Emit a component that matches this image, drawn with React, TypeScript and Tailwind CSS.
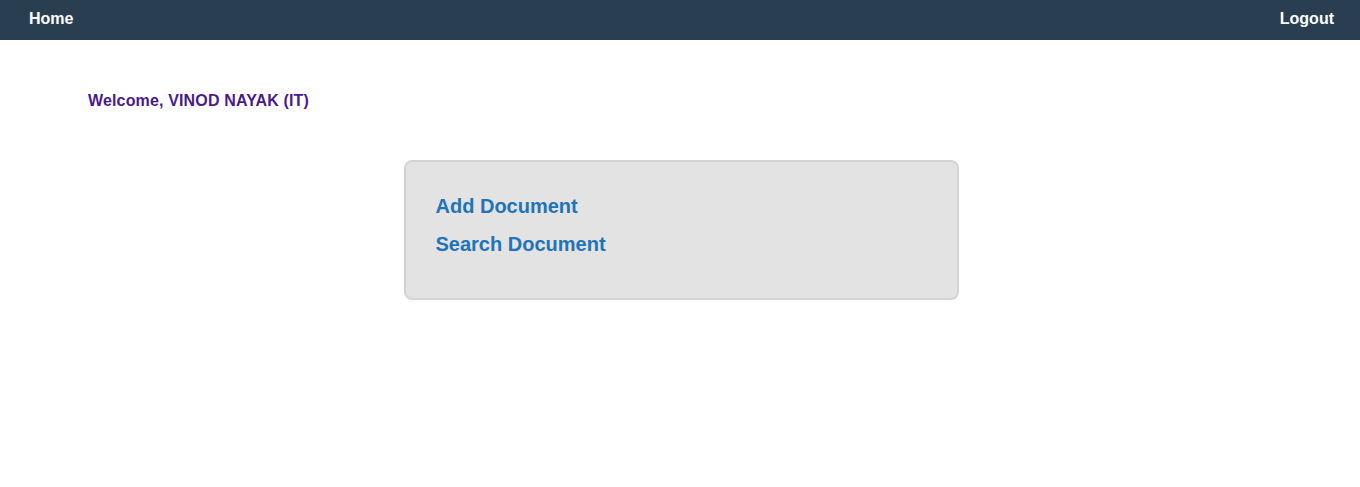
export default function App() {
  return (
    <div className="min-h-[487px] bg-white font-['Liberation_Sans',Arial,sans-serif]">
      <nav className="h-10 bg-[#2a3e52] flex items-center justify-between pl-[29px] pr-[26px] pb-[2px]">
        <a className="text-white font-bold text-base">Home</a>
        <a className="text-white font-bold text-base">Logout</a>
      </nav>

      <div className="pl-[88px] pt-[51px] text-base font-bold text-[#4b1a8c] leading-5 tracking-[0.15px]">
        Welcome, VINOD NAYAK (IT)
      </div>

      <div className="flex justify-center mt-[49px]">
        <div className="w-[555px] h-[140px] ml-[2px] rounded-lg border-2 border-[#d4d4d4] bg-[#e3e3e3] pl-[30px] pt-[33px]">
          <div className="flex flex-col gap-[15px] text-[20px] font-bold text-[#2174b8] leading-[23px]">
            <a>Add Document</a>
            <a>Search Document</a>
          </div>
        </div>
      </div>
    </div>
  );
}
